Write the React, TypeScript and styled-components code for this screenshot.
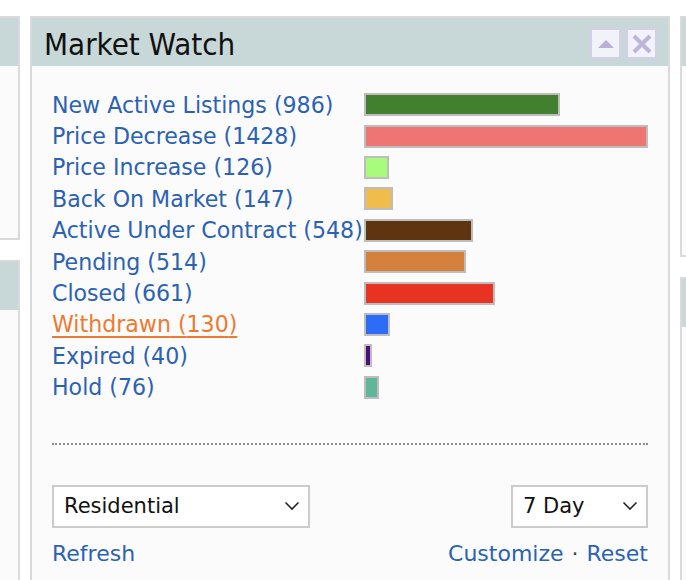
import styled, { createGlobalStyle } from 'styled-components';

const LINK = '#2b62b3';
const MAX_BAR = 284;

type Stat = { label: string; count: number; color: string; active?: boolean };

const STATS: Stat[] = [
	{ label: 'New Active Listings', count: 986, color: '#42802f' },
	{ label: 'Price Decrease', count: 1428, color: '#ee7571' },
	{ label: 'Price Increase', count: 126, color: '#a9fb7c' },
	{ label: 'Back On Market', count: 147, color: '#f0bc4b' },
	{ label: 'Active Under Contract', count: 548, color: '#5e3510' },
	{ label: 'Pending', count: 514, color: '#d4813d' },
	{ label: 'Closed', count: 661, color: '#e83322' },
	{ label: 'Withdrawn', count: 130, color: '#2c6cf6', active: true },
	{ label: 'Expired', count: 40, color: '#4a0e7e' },
	{ label: 'Hold', count: 76, color: '#5fb69b' },
];

const GlobalStyle = createGlobalStyle`
	html, body {
		margin: 0;
		height: 580px;
		overflow: hidden;
		background: #ffffff;
		font-family: "DejaVu Sans", Verdana, sans-serif;
	}
`;

const Chevron = () => (
	<svg width="16" height="10" viewBox="0 0 16 10">
		<polyline points="1.5,1.5 8,8 14.5,1.5" fill="none" stroke="#222" strokeWidth="1.6" />
	</svg>
);

const App = () => {
	const max = Math.max(...STATS.map((s) => s.count));

	return (
		<>
			<GlobalStyle />
			<Dashboard>
				<SideColumn>
					<SidePanel side="left" bodyHeight={172}>
						<PanelHeader />
					</SidePanel>
					<SidePanel side="left" bodyHeight={400}>
						<PanelHeader />
					</SidePanel>
				</SideColumn>

				<Panel>
					<MainHeader>
						<Title>Market Watch</Title>
						<HeaderButtons>
							<IconButton aria-label="Collapse">
								<svg width="16" height="8" viewBox="0 0 16 8">
									<polygon points="8,0 16,8 0,8" fill="#b8b0d8" />
								</svg>
							</IconButton>
							<IconButton aria-label="Close">
								<svg width="22" height="22" viewBox="0 0 22 22">
									<path d="M3 3 L19 19 M19 3 L3 19" stroke="#bdb6da" strokeWidth="4" />
								</svg>
							</IconButton>
						</HeaderButtons>
					</MainHeader>
					<Body>
						<StatList>
							{STATS.map((s) => (
								<StatRow key={s.label}>
									<StatLink active={s.active}>
										{s.label} ({s.count})
									</StatLink>
									<BarTrack>
										<Bar
											color={s.color}
											style={{ width: Math.max(6, Math.round((s.count / max) * MAX_BAR)) }}
										/>
									</BarTrack>
								</StatRow>
							))}
						</StatList>
						<Divider />
						<Controls>
							<SelectWrap width={258}>
								<Select defaultValue="Residential">
									<option>Residential</option>
									<option>Commercial</option>
									<option>Land</option>
								</Select>
								<SelectIcon>
									<Chevron />
								</SelectIcon>
							</SelectWrap>
							<SelectWrap width={137}>
								<Select defaultValue="7 Day">
									<option>1 Day</option>
									<option>7 Day</option>
									<option>30 Day</option>
								</Select>
								<SelectIcon>
									<Chevron />
								</SelectIcon>
							</SelectWrap>
						</Controls>
						<Footer>
							<FooterLink>Refresh</FooterLink>
							<FooterRight>
								<FooterLink>Customize</FooterLink>
								<Dot>·</Dot>
								<FooterLink>Reset</FooterLink>
							</FooterRight>
						</Footer>
					</Body>
				</Panel>

				<SideColumn>
					<SidePanel side="right" bodyHeight={189}>
						<PanelHeader />
					</SidePanel>
					<SidePanel side="right" bodyHeight={400}>
						<PanelHeader />
					</SidePanel>
				</SideColumn>
			</Dashboard>
		</>
	);
};

const Dashboard = styled.div`
	display: grid;
	grid-template-columns: 20px 640px 1fr;
	column-gap: 10px;
	padding-top: 16px;
	align-items: start;
`;

const SideColumn = styled.div`
	display: flex;
	flex-direction: column;
	gap: 20px;
`;

const SidePanel = styled.div<{ side: 'left' | 'right'; bodyHeight: number }>`
	background: #fbfbfb;
	border: 2px solid #dadada;
	${({ side }) => (side === 'left' ? 'border-left: none;' : 'border-right: none;')}
	padding-bottom: ${({ bodyHeight }) => bodyHeight}px;
`;

const PanelHeader = styled.div`
	height: 48px;
	background: #c8d8d8;
`;

const Panel = styled.section`
	background: #fbfbfb;
	border: 2px solid #dadada;
	min-height: 620px;
`;

const MainHeader = styled.header`
	display: flex;
	align-items: center;
	justify-content: space-between;
	height: 48px;
	padding: 0 11px 0 12px;
	background: #c8d8d8;
`;

const Title = styled.h2`
	margin: 0;
	font-family: "DejaVu Sans", Verdana, sans-serif;
	font-stretch: condensed;
	font-weight: normal;
	font-size: 31px;
	color: #111;
	padding-top: 4px;
`;

const HeaderButtons = styled.div`
	display: flex;
	gap: 5px;
	padding-top: 3px;
`;

const IconButton = styled.button`
	display: flex;
	align-items: center;
	justify-content: center;
	width: 31px;
	height: 31px;
	padding: 0;
	background: #f2f3f8;
	border: 2px solid #d3cfe8;
	cursor: pointer;
`;

const Body = styled.div`
	padding: 23px 20px 20px 20px;
`;

const StatList = styled.ul`
	list-style: none;
	margin: 0;
	padding: 0;
`;

const StatRow = styled.li`
	display: grid;
	grid-template-columns: 312px 1fr;
	align-items: center;
	height: 31.4px;
`;

const StatLink = styled.a<{ active?: boolean }>`
	font-size: 22.1px;
	color: ${({ active }) => (active ? '#ec7a30' : LINK)};
	text-decoration: ${({ active }) => (active ? 'underline' : 'none')};
	text-underline-offset: 4px;
	white-space: nowrap;
	cursor: pointer;
`;

const BarTrack = styled.div`
	display: flex;
`;

const Bar = styled.div<{ color: string }>`
	box-sizing: border-box;
	height: 23px;
	background: ${({ color }) => color};
	border: 2px solid #bdbdbd;
`;

const Divider = styled.hr`
	margin: 40px 0 0;
	border: none;
	border-top: 2px dotted #8c8c8c;
	height: 0;
`;

const Controls = styled.div`
	display: flex;
	justify-content: space-between;
	margin-top: 40px;
`;

const SelectWrap = styled.div<{ width: number }>`
	position: relative;
	width: ${({ width }) => width}px;
`;

const Select = styled.select`
	appearance: none;
	box-sizing: border-box;
	width: 100%;
	height: 43px;
	padding: 0 36px 0 10px;
	background: #ffffff;
	border: 2px solid #cccccc;
	border-radius: 0;
	font-family: "DejaVu Sans", Verdana, sans-serif;
	font-size: 21px;
	color: #111;
`;

const SelectIcon = styled.span`
	position: absolute;
	right: 10px;
	top: 16px;
	pointer-events: none;
	display: flex;
`;

const Footer = styled.div`
	display: flex;
	justify-content: space-between;
	align-items: center;
	margin-top: 13px;
`;

const FooterRight = styled.div`
	display: flex;
	align-items: center;
	gap: 8px;
`;

const FooterLink = styled.a`
	font-size: 22px;
	color: ${LINK};
	cursor: pointer;
`;

const Dot = styled.span`
	font-size: 22px;
	color: #444;
`;

export default App;
